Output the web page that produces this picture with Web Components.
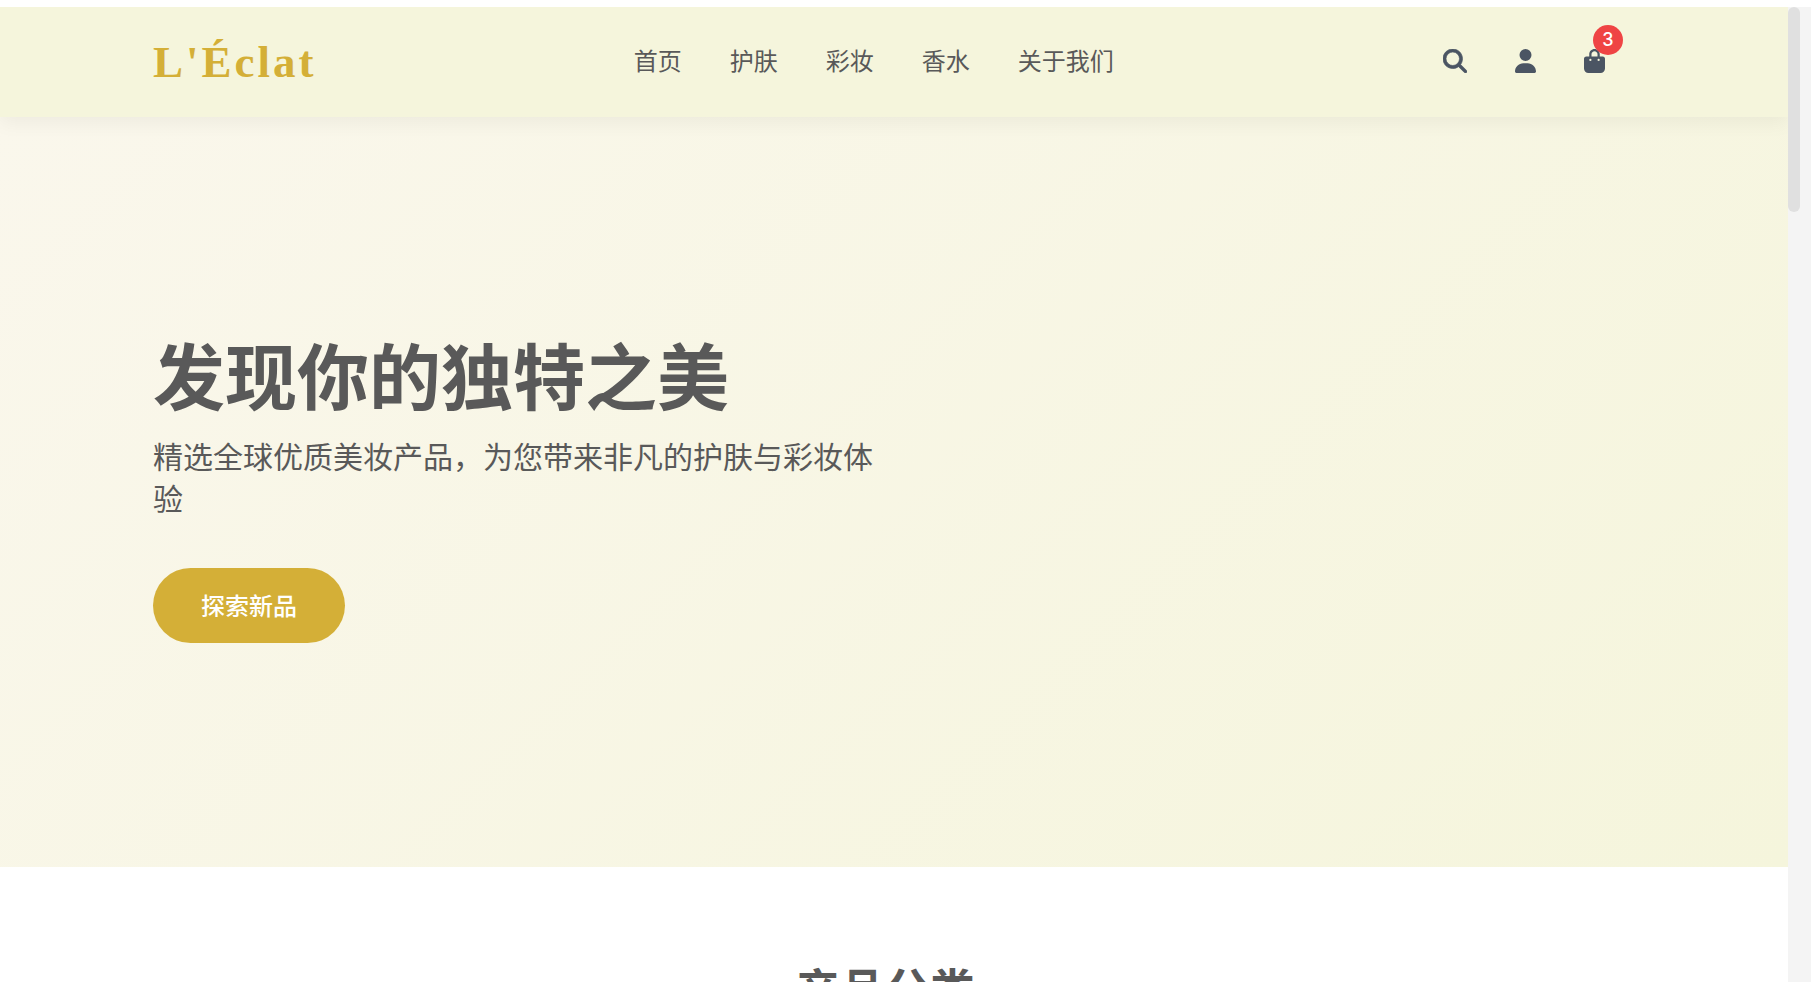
<!DOCTYPE html>
<html lang="zh-CN">
<head>
<meta charset="utf-8">
<title>L'Éclat</title>
<style>
html, body { height: 100%; }
body { margin: 0; overflow: hidden; background: #fff; color: #595959; font-family: "Noto Sans", "Noto Sans CJK SC", sans-serif; font-size: 24px; line-height: 36px; }
</style>
</head>
<body>
<beauty-shop></beauty-shop>
<script>
const define = (name, html) => {
  const template = document.createElement('template');
  template.innerHTML = html;
  customElements.define(name, class extends HTMLElement {
    constructor() {
      super();
      this.attachShadow({ mode: 'open' }).append(template.content.cloneNode(true));
    }
  });
};

define('nav-link', `
<style>
:host { display: block; }
a { color: inherit; text-decoration: none; }
</style>
<a href="#"><slot></slot></a>`);

define('icon-button', `
<style>
:host { display: block; position: relative; }
button { display: block; border: 0; padding: 0 12px; background: none; color: #4b5563; font: inherit; }
::slotted(svg) { display: block; height: 24px; fill: currentColor; }
::slotted(span) { position: absolute; top: -24px; right: -6px; width: 30px; height: 30px; border-radius: 50%; background: #ef4444; color: #fff; font: 500 18px/30px Inter, sans-serif; text-align: center; }
</style>
<button type="button"><slot></slot></button>
<slot name="badge"></slot>`);

define('site-header', `
<style>
:host { display: block; position: relative; z-index: 1; padding-right: 18px; background: #f5f5dc; box-shadow: 0 6px 18px rgba(0,0,0,.05); }
.bar { display: flex; align-items: center; justify-content: space-between; max-width: 1464px; margin: 0 auto; padding: 22px 36px 24px; }
.logo { padding-top: 2px; color: #d4af37; font: bold 45px/62px "Liberation Serif", serif; letter-spacing: 3px; text-decoration: none; }
nav { display: flex; gap: 48px; }
.icons { display: flex; gap: 24px; }
</style>
<div class="bar">
  <a class="logo" href="#">L'Éclat</a>
  <nav>
    <nav-link>首页</nav-link><nav-link>护肤</nav-link><nav-link>彩妆</nav-link><nav-link>香水</nav-link><nav-link>关于我们</nav-link>
  </nav>
  <div class="icons">
    <icon-button><svg width="24" viewBox="0 0 512 512" aria-label="搜索"><path stroke="currentColor" stroke-width="14" d="M416 208c0 45.900-14.900 88.300-40 122.700L502.600 457.400c12.500 12.500 12.500 32.800 0 45.300s-32.800 12.500-45.300 0L330.700 376c-34.400 25.200-76.800 40-122.700 40C93.100 416 0 322.900 0 208S93.100 0 208 0S416 93.100 416 208zM208 352a144 144 0 1 0 0-288 144 144 0 1 0 0 288z"/></svg></icon-button>
    <icon-button><svg width="21" viewBox="0 0 448 512" aria-label="账户"><path d="M224 256A128 128 0 1 0 224 0a128 128 0 1 0 0 256zm-45.700 48C79.800 304 0 383.800 0 482.300C0 498.700 13.300 512 29.700 512H418.300c16.400 0 29.700-13.300 29.700-29.700C448 383.800 368.200 304 269.700 304H178.300z"/></svg></icon-button>
    <icon-button><svg width="21" viewBox="0 0 448 512" aria-label="购物袋"><path d="M160 112c0-35.300 28.700-64 64-64s64 28.700 64 64v48H160V112zm-48 48H48c-26.500 0-48 21.500-48 48V416c0 53 43 96 96 96H352c53 0 96-43 96-96V208c0-26.500-21.500-48-48-48H336V112C336 50.100 285.900 0 224 0S112 50.100 112 112v48zm24 48a24 24 0 1 1 0 48 24 24 0 1 1 0-48zm152 24a24 24 0 1 1 48 0 24 24 0 1 1-48 0z"/></svg><span slot="badge">3</span></icon-button>
  </div>
</div>`);

define('hero-banner', `
<style>
:host { display: flex; align-items: center; box-sizing: border-box; min-height: 750px; padding: 0 18px 2px 0; background: linear-gradient(135deg, #faf7ec 0%, #f5f5dc 100%); }
.inner { box-sizing: border-box; width: 100%; max-width: 1536px; margin: 0 auto; padding: 0 36px; }
.copy { width: 50%; }
h1 { margin: 0 0 24px; font-size: 72px; line-height: 72px; font-weight: 700; }
p { margin: 0 0 48px; font-size: 30px; line-height: 42px; }
button { display: block; border: 0; border-radius: 38px; padding: 18px 48px; background: #d4af37; color: #fff; font: 500 24px/39px "Noto Sans", "Noto Sans CJK SC", sans-serif; }
</style>
<div class="inner"><div class="copy">
  <h1><slot name="title"></slot></h1>
  <p><slot name="text"></slot></p>
  <button type="button"><slot name="action"></slot></button>
</div></div>`);

define('category-section', `
<style>
:host { display: block; padding: 96px 18px 96px 0; background: #fff; }
h2 { margin: 0; font-size: 45px; line-height: 54px; text-align: center; }
</style>
<h2><slot></slot></h2>`);

define('scroll-track', `
<style>
:host { display: block; background: #f4f4f4; }
div { width: 12px; height: 205px; border-radius: 6px; background: #e0e0e0; }
</style>
<div></div>`);

define('beauty-shop', `
<style>
:host { display: grid; grid-template-columns: 1fr 23px; height: 100%; box-sizing: border-box; border-top: 7px solid #fff; }
main { min-width: 0; overflow: hidden; }
</style>
<main>
  <site-header></site-header>
  <hero-banner>
    <span slot="title">发现你的独特之美</span>
    <span slot="text">精选全球优质美妆产品，为您带来非凡的护肤与彩妆体验</span>
    <span slot="action">探索新品</span>
  </hero-banner>
  <category-section>产品分类</category-section>
</main>
<scroll-track></scroll-track>`);
</script>
</body>
</html>
